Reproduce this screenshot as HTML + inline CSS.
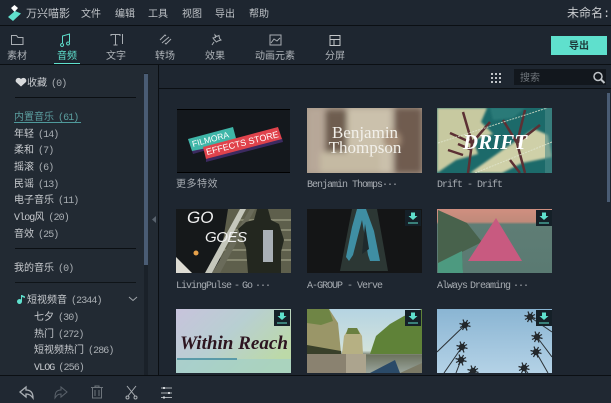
<!DOCTYPE html>
<html><head><meta charset="utf-8"><style>
*{margin:0;padding:0;box-sizing:border-box}
html,body{width:611px;height:403px;overflow:hidden;background:#1e2630}
body{position:relative;font-family:"Liberation Mono","WenQuanYi Zen Hei","Noto Sans CJK SC",monospace;color:#c9ccd0;font-size:10px}
.a{position:absolute;white-space:nowrap}
.m{top:9px;font-size:10px;line-height:13px;color:#bfc3c7;letter-spacing:0}
.t{top:51px;font-size:10px;line-height:13px;color:#aeb3b8;transform:translateX(-50%)}
.s{left:14px;line-height:13px;color:#c8cbcf;font-size:10px;letter-spacing:0}
.s i{font-style:normal;letter-spacing:-.9px;color:#a9aeb3;margin-left:4px}
.c{font-size:10px;line-height:12px;color:#a7acb2;letter-spacing:-1px}
.l{background:#0b0f13}
</style></head><body>
<div class="a" style="left:0;top:65px;width:158px;height:311px;background:#222a33"></div>
<div class="a l" style="left:0;top:25px;width:611px;height:1px"></div>
<div class="a l" style="left:0;top:64px;width:611px;height:1px"></div>
<div class="a l" style="left:158px;top:65px;width:1px;height:311px"></div>
<div class="a l" style="left:159px;top:88px;width:452px;height:1px"></div>
<div class="a l" style="left:0;top:375px;width:611px;height:1px"></div>
<div class="a" style="left:0;top:376px;width:611px;height:27px;background:#202832"></div>

<svg class="a" style="left:7px;top:4px" width="15" height="18" viewBox="0 0 15 18"><path d="M4 4 7.500 1 11 4 7.500 8z" fill="#fff"/><path d="M1 13 8 7 14 9.500 6 17z" fill="#5fe0cd"/></svg>
<div class="a m" style="left:26px;font-size:11px">万兴喵影</div>
<div class="a m" style="left:81px">文件</div><div class="a m" style="left:115px">编辑</div>
<div class="a m" style="left:148px">工具</div><div class="a m" style="left:182px">视图</div>
<div class="a m" style="left:215px">导出</div><div class="a m" style="left:249px">帮助</div>
<div class="a" style="left:567px;top:7px;font-size:12px;line-height:14px;color:#c8cbce">未命名:</div>

<svg class="a" style="left:0;top:30px" width="350" height="18" fill="none" stroke="#a9aeb3" stroke-width="1">
<path d="M11.500 5.500h5l1.500 2h5v7h-11.500z"/>
<path d="M62 13.500a1.500 1.500 0 1 0 .1 0M62.500 13V6l7-2v8M68 12a1.500 1.500 0 1 0 .1 0" stroke="#5fe0cd"/>
<path d="M111 6V4.500h9V6M115.500 4.500V15M113.500 15h4M122.500 4v10"/>
<path d="M160 10l5-5 1 1M171 9l-5 5-1-1M162 13l7-6"/>
<path d="M215 5l1.500 1.500 2.500-1 .5 3 1.500 1.500-3 1-1.500 1-2-2-1.500-2 2.500-.5zM214 12l-2 3"/>
<path d="M270 5h11v10h-11zM271 13l3-4 3 2 3-3"/>
<path d="M330 5.500h10v10h-10zM330 9.500h10M334 9.500v6" stroke="#c2c5c8"/>
</svg>
<div class="a t" style="left:17px">素材</div>
<div class="a t" style="left:67px;color:#5fe0cd">音频</div>
<div class="a" style="left:54px;top:63px;width:26px;height:1px;background:#5fe0cd"></div>
<div class="a t" style="left:116px">文字</div><div class="a t" style="left:165px">转场</div>
<div class="a t" style="left:215px">效果</div><div class="a t" style="left:275px">动画元素</div>
<div class="a t" style="left:335px">分屏</div>
<div class="a" style="left:551px;top:36px;width:56px;height:19px;background:#5fe0cd;color:#1d3a3a;font-size:10px;line-height:19px;padding-top:2px;text-align:center;font-weight:bold">导出</div>

<svg class="a" style="left:490px;top:72px" width="12" height="12" fill="#c0c4c8"><path d="M1 1h2v2H1zM5 1h2v2H5zM9 1h2v2H9zM1 5h2v2H1zM5 5h2v2H5zM9 5h2v2H9zM1 9h2v2H1zM5 9h2v2H5zM9 9h2v2H9z"/></svg>
<div class="a" style="left:514px;top:69px;width:92px;height:16px;background:#12171d"></div>
<div class="a" style="left:520px;top:73px;font-size:10px;line-height:13px;color:#6f757b">搜索</div>
<svg class="a" style="left:592px;top:71px" width="14" height="13" fill="none" stroke="#c0c4c8" stroke-width="1.500"><circle cx="6" cy="5.500" r="4"/><path d="M9 8.500l3.500 3.500" stroke-width="2"/></svg>

<div class="a" style="left:144px;top:73px;width:4px;height:302px;background:#1a2129"></div>
<div class="a" style="left:144px;top:74px;width:4px;height:191px;background:#4a5c74"></div>
<div class="a" style="left:607px;top:93px;width:3px;height:109px;background:#4a5c74"></div>
<svg class="a" style="left:152px;top:216px" width="5" height="7"><path d="M4 0v7L0 3.500z" fill="#59636e"/></svg>

<svg class="a" style="left:15px;top:77px" width="12" height="10"><path d="M6 9.500 1 5C-.5 2.500 3-1 6 2c3-3 6.500.5 5 3z" fill="#d8dadc"/></svg>
<div class="a s" style="left:27px;top:78px">收藏<i>(0)</i></div>
<div class="a l" style="left:15px;top:97px;width:121px;height:1px"></div>
<div class="a s" style="top:112px;color:#5c9fa0">内置音乐<i style="color:#5c9fa0">(61)</i></div>
<div class="a" style="left:14px;top:122px;width:67px;height:1px;background:#4f9a9c"></div>
<div class="a s" style="top:129px">年轻<i>(14)</i></div>
<div class="a s" style="top:145px">柔和<i>(7)</i></div>
<div class="a s" style="top:162px">摇滚<i>(6)</i></div>
<div class="a s" style="top:179px">民谣<i>(13)</i></div>
<div class="a s" style="top:195px">电子音乐<i>(11)</i></div>
<div class="a s" style="top:212px"><span style="letter-spacing:-.9px">Vlog</span>风<i>(20)</i></div>
<div class="a s" style="top:229px">音效<i>(25)</i></div>
<div class="a l" style="left:15px;top:248px;width:121px;height:1px"></div>
<div class="a s" style="top:263px">我的音乐<i>(0)</i></div>
<div class="a" style="left:15px;top:282px;width:121px;height:1px;background:#0f1418"></div>
<svg class="a" style="left:16px;top:294px" width="9" height="11"><path d="M5 1h1v6.500a2.500 2.500 0 1 1-1-2zM6 1l3 1.500V4L6 3z" fill="#5fe0cd"/></svg>
<div class="a s" style="left:27px;top:295px">短视频音<i>(2344)</i></div>
<svg class="a" style="left:128px;top:296px" width="10" height="6" fill="none" stroke="#a0a5aa"><path d="M1 1l4 3.500L9 1"/></svg>
<div class="a s" style="left:34px;top:312px">七夕<i>(30)</i></div>
<div class="a s" style="left:34px;top:329px">热门<i>(272)</i></div>
<div class="a s" style="left:34px;top:345px">短视频热门<i>(286)</i></div>
<div class="a s" style="left:34px;top:362px"><span style="letter-spacing:-.9px">VLOG</span><i>(256)</i></div>

<svg class="a" style="left:160px;top:100px" width="446" height="275" font-family="Liberation Serif,serif">
<defs>
<filter id="b"><feGaussianBlur stdDeviation="3"/></filter>
<filter id="b1"><feGaussianBlur stdDeviation="1"/></filter>
<clipPath id="c1"><rect x="147" y="8" width="115" height="65"/></clipPath>
<clipPath id="c2"><rect x="277" y="8" width="115" height="65"/></clipPath>
<clipPath id="c3"><rect x="16" y="109" width="115" height="64"/></clipPath>
<clipPath id="c4"><rect x="147" y="209" width="115" height="64"/></clipPath>
<clipPath id="c5"><rect x="277" y="209" width="115" height="64"/></clipPath>
<linearGradient id="g2" x1="0" x2="1" y1="0" y2=".6"><stop offset="0" stop-color="#c8c3dc"/><stop offset=".5" stop-color="#b8cfd2"/><stop offset="1" stop-color="#bcd9a8"/></linearGradient>
<linearGradient id="g3" x1="0" x2="0" y1="0" y2="1"><stop offset="0" stop-color="#8ab5d3"/><stop offset="1" stop-color="#b4d2e6"/></linearGradient>
<linearGradient id="g4" x1="0" x2="0" y1="0" y2="1"><stop offset="0" stop-color="#d08f80"/><stop offset=".2" stop-color="#c08a7a"/><stop offset=".24" stop-color="#5f7d75"/><stop offset="1" stop-color="#5a7a72"/></linearGradient>
<linearGradient id="g5" x1="0" x2="0" y1="0" y2="1"><stop offset="0" stop-color="#b5d4e2"/><stop offset=".65" stop-color="#d2e2dc"/><stop offset=".72" stop-color="#6d7360"/><stop offset="1" stop-color="#9aa59c"/></linearGradient>
<g id="d"><rect width="16" height="16" fill="#152028"/><path d="M6 2.500h4V6h2.500L8 10 3.500 6H6z" fill="#5fe0cd"/><path d="M3 12.500h10v1H3z" fill="#5fe0cd"/></g>
<g id="p"><circle r="3.200" fill="#23282c"/><path d="M-5.500-1.500 5.500 1.500M-2-5.500 2 5.500M-5 2.500 5-2.500M2.500-5-2.500 5" stroke="#23282c" stroke-width="1.200"/></g>
</defs>

<rect x="17" y="9" width="113" height="64" fill="#14181d"/>
<rect x="17" y="9" width="113" height="1" fill="#000"/><rect x="17" y="72" width="113" height="1" fill="#000"/>
<path d="M28 39l4 12 1 3 14-4-3-5z" fill="#3c2a60"/>
<path d="M46 59l0 3 77-20-1-4z" fill="#3c2a60"/>
<path d="M28 39 73 27 77 42 32 51z" fill="#3fb6a8"/>
<path d="M43 47 118 27 122 39 46 59z" fill="#e0434c"/>
<text transform="translate(33 47) rotate(-15)" font-family="Liberation Sans" font-size="8.500" fill="#fff">FILMORA</text>
<text transform="translate(47 55) rotate(-14)" font-family="Liberation Sans" font-size="9" fill="#fff">EFFECTS STORE</text>

<rect x="147" y="8" width="115" height="65" fill="#a8998a"/>
<g clip-path="url(#c1)"><g filter="url(#b)">
<rect x="147" y="8" width="20" height="65" fill="#b7a798"/>
<rect x="165" y="10" width="22" height="42" fill="#6e5d50"/>
<rect x="187" y="8" width="45" height="65" fill="#cbc1ac"/>
<rect x="160" y="52" width="60" height="21" fill="#c5baa3"/>
<rect x="235" y="8" width="27" height="65" fill="#6f5c4f"/>
<circle cx="232" cy="40" r="9" fill="#a48d78"/>
</g></g>
<text x="205" y="38" text-anchor="middle" font-size="17" fill="#f2f0ea">Benjamin</text>
<text x="205" y="53" text-anchor="middle" font-size="17" fill="#f2f0ea">Thompson</text>

<rect x="277" y="8" width="115" height="65" fill="#1c6a6a"/>
<g clip-path="url(#c2)">
<g filter="url(#b1)">
<path d="M277 8h50l-6 14 12 12-20 6 5 14-22 6-19 13z" fill="#c7c9a0"/>
<path d="M310 73l34-24 30-20 14 6 4 22-30 6-20 10z" fill="#cfd0a8"/>
<path d="M330 8h35l-12 10-20 2z" fill="#2a7a78"/>
</g>
<rect x="385" y="8" width="7" height="65" fill="#4a8a88" opacity=".6"/>
<path d="M308 73 312 43M312 43 290 33M312 43 303 12M312 43 330 22M303 55 288 50M312 50 298 44" stroke="#5c3034" stroke-width="2.500" fill="none"/>
<path d="M365 73 357 43M357 43 343 20M357 43 365 10M357 43 380 25M360 73 350 60" stroke="#5c3034" stroke-width="2.500" fill="none"/>
<path d="M278 43 387 8M315 73 392 42" stroke="#e0e6d0" stroke-dasharray="2 1" fill="none" opacity=".8"/>
<text x="335" y="49" text-anchor="middle" font-size="21" font-weight="bold" font-style="italic" fill="#fff">DRIFT</text>
</g>

<rect x="16" y="109" width="115" height="64" fill="#15181a"/>
<g clip-path="url(#c3)">
<path d="M68 109h63v64H58z" fill="#5e5f4c"/>
<path d="M60 160h71M64 150h67M68 140h63M72 130h59M76 120h55" stroke="#85866f" stroke-width="2"/>
<path d="M45 173 80 109h6L52 173z" fill="#c5c7bc"/>
<path d="M60 173 95 109h-5L52 173z" fill="#6a6b5a"/>
<path d="M16 157l16 16H16z" fill="#dedcd4"/>
<path d="M78 129l8-7 8-2 3-11h11l3 11 8 4 5 16-3 12v21H88l-2-25z" fill="#23271f"/>
<rect x="103" y="130" width="10" height="32" fill="#a9b0b6"/>
<circle cx="36" cy="153" r="2.500" fill="#e6a14a"/>
<text x="27" y="123" font-family="Liberation Sans" font-style="italic" font-size="17" fill="#f0f0f0">GO</text>
<text x="45" y="142" font-family="Liberation Sans" font-style="italic" font-size="15" fill="#f0f0f0" textLength="42">GOES</text>
</g>

<rect x="147" y="109" width="115" height="64" fill="#141516"/>
<path d="M192 109h25l11 62h-48z" fill="#2c3734"/>
<path d="M197 109h9l8 22 6 30-10 0-2-6-6-35-9 35-4 6-3-4 6-30z" fill="#3f8ea3"/>
<path d="M205 124l4 25-7 5z" fill="#1f2a2c"/>
<rect x="245" y="210" width="0" height="0"/>
<use href="#d" x="245" y="110"/>

<rect x="277" y="109" width="115" height="64" fill="url(#g4)"/>
<path d="M278 110 307 123 322 142 302 152 303 170 278 173z" fill="#48624c"/>
<path d="M278 173l0-10 24-12 1 22z" fill="#4d9a80"/>
<path d="M336 118l26 43h-54z" fill="#c85a80"/>
<use href="#d" x="376" y="110"/>

<rect x="16" y="209" width="115" height="64" fill="url(#g2)"/>
<path d="M16 259h115v14H16z" fill="#a3d0c8" opacity=".7"/><rect x="17" y="258" width="60" height="2" fill="#5a9aa8"/>
<text x="20" y="249" font-family="Liberation Serif" font-style="italic" font-weight="bold" font-size="19" textLength="108" lengthAdjust="spacingAndGlyphs" fill="#2d1520">Within Reach</text>
<use href="#d" x="114" y="210"/>

<rect x="147" y="209" width="115" height="64" fill="url(#g5)"/>
<g clip-path="url(#c4)">
<path d="M147 209h22l9 14 3 30h-34z" fill="#9a9668"/>
<path d="M147 209h22l4 12-12 4-14-2z" fill="#6f8545"/>
<path d="M147 245l34 6v3h-34z" fill="#39402a"/>
<path d="M147 254h40v19h-40z" fill="#8a8270"/>
<path d="M182 254l2-18 5-8h8l5 8 1 18z" fill="#b6b083"/><path d="M188 228h9l3 6h-14z" fill="#6a8040"/>
<path d="M210 254l6-18 14-12 14-8 18-7v45z" fill="#5f8238"/>
<path d="M186 254h20v19h-20z" fill="#aca48e"/>
<path d="M210 273l25-13 5 13z" fill="#2a4a68"/><path d="M240 273l22-10v10z" fill="#7b7a66"/>
</g>
<use href="#d" x="245" y="210"/>

<rect x="277" y="209" width="115" height="64" fill="url(#g3)"/>
<g clip-path="url(#c5)">
<path d="M305 225 277 252M302 247 284 273M301 260 296 273M370 217 392 232M377 237 392 257M376 252 388 273M364 268 368 273" stroke="#2c3236" fill="none"/>
<use href="#p" x="305" y="225"/><use href="#p" x="302" y="247"/><use href="#p" x="301" y="260"/><use href="#p" x="313" y="271"/><use href="#p" x="370" y="217"/><use href="#p" x="377" y="237"/><use href="#p" x="376" y="252"/><use href="#p" x="364" y="268"/>
</g>
<use href="#d" x="376" y="210"/>
</svg>

<div class="a c" style="left:176px;top:180px;letter-spacing:.5px">更多特效</div>
<div class="a c" style="left:307px;top:180px">Benjamin Thomps···</div>
<div class="a c" style="left:437px;top:180px">Drift - Drift</div>
<div class="a c" style="left:176px;top:281px;word-spacing:-2px">LivingPulse - Go ···</div>
<div class="a c" style="left:307px;top:281px">A-GROUP - Verve</div>
<div class="a c" style="left:437px;top:281px;word-spacing:-2px">Always Dreaming ···</div>

<svg class="a" style="left:0;top:376px" width="180" height="27" fill="none" stroke="#a9aeb3">
<path d="M20 16l6-5v3c5 0 7 3 7 8-2-3-4-4-7-4v3z" stroke-width="1.300"/>
<path d="M67 16l-6-5v3c-5 0-6 3-6 8 2-3 3-4 6-4v3z" stroke="#5a626b"/>
<path d="M91 11.500h12M92.500 11.500v10.500h9v-10.500M95 14v6M99 14v6M95 11.500v-1.500h4v1.500" stroke="#6d747b"/>
<path d="M127 10l8 10M136 10l-8 10"/><circle cx="127.500" cy="21.500" r="1.500"/><circle cx="135.500" cy="21.500" r="1.500"/>
<path d="M161 12h11M161 17h11M161 21.500h11"/><path d="M164 11v2M169 16v2M164 20.500v2" stroke-width="2" stroke="#d0d3d6"/>
</svg>
</body></html>
